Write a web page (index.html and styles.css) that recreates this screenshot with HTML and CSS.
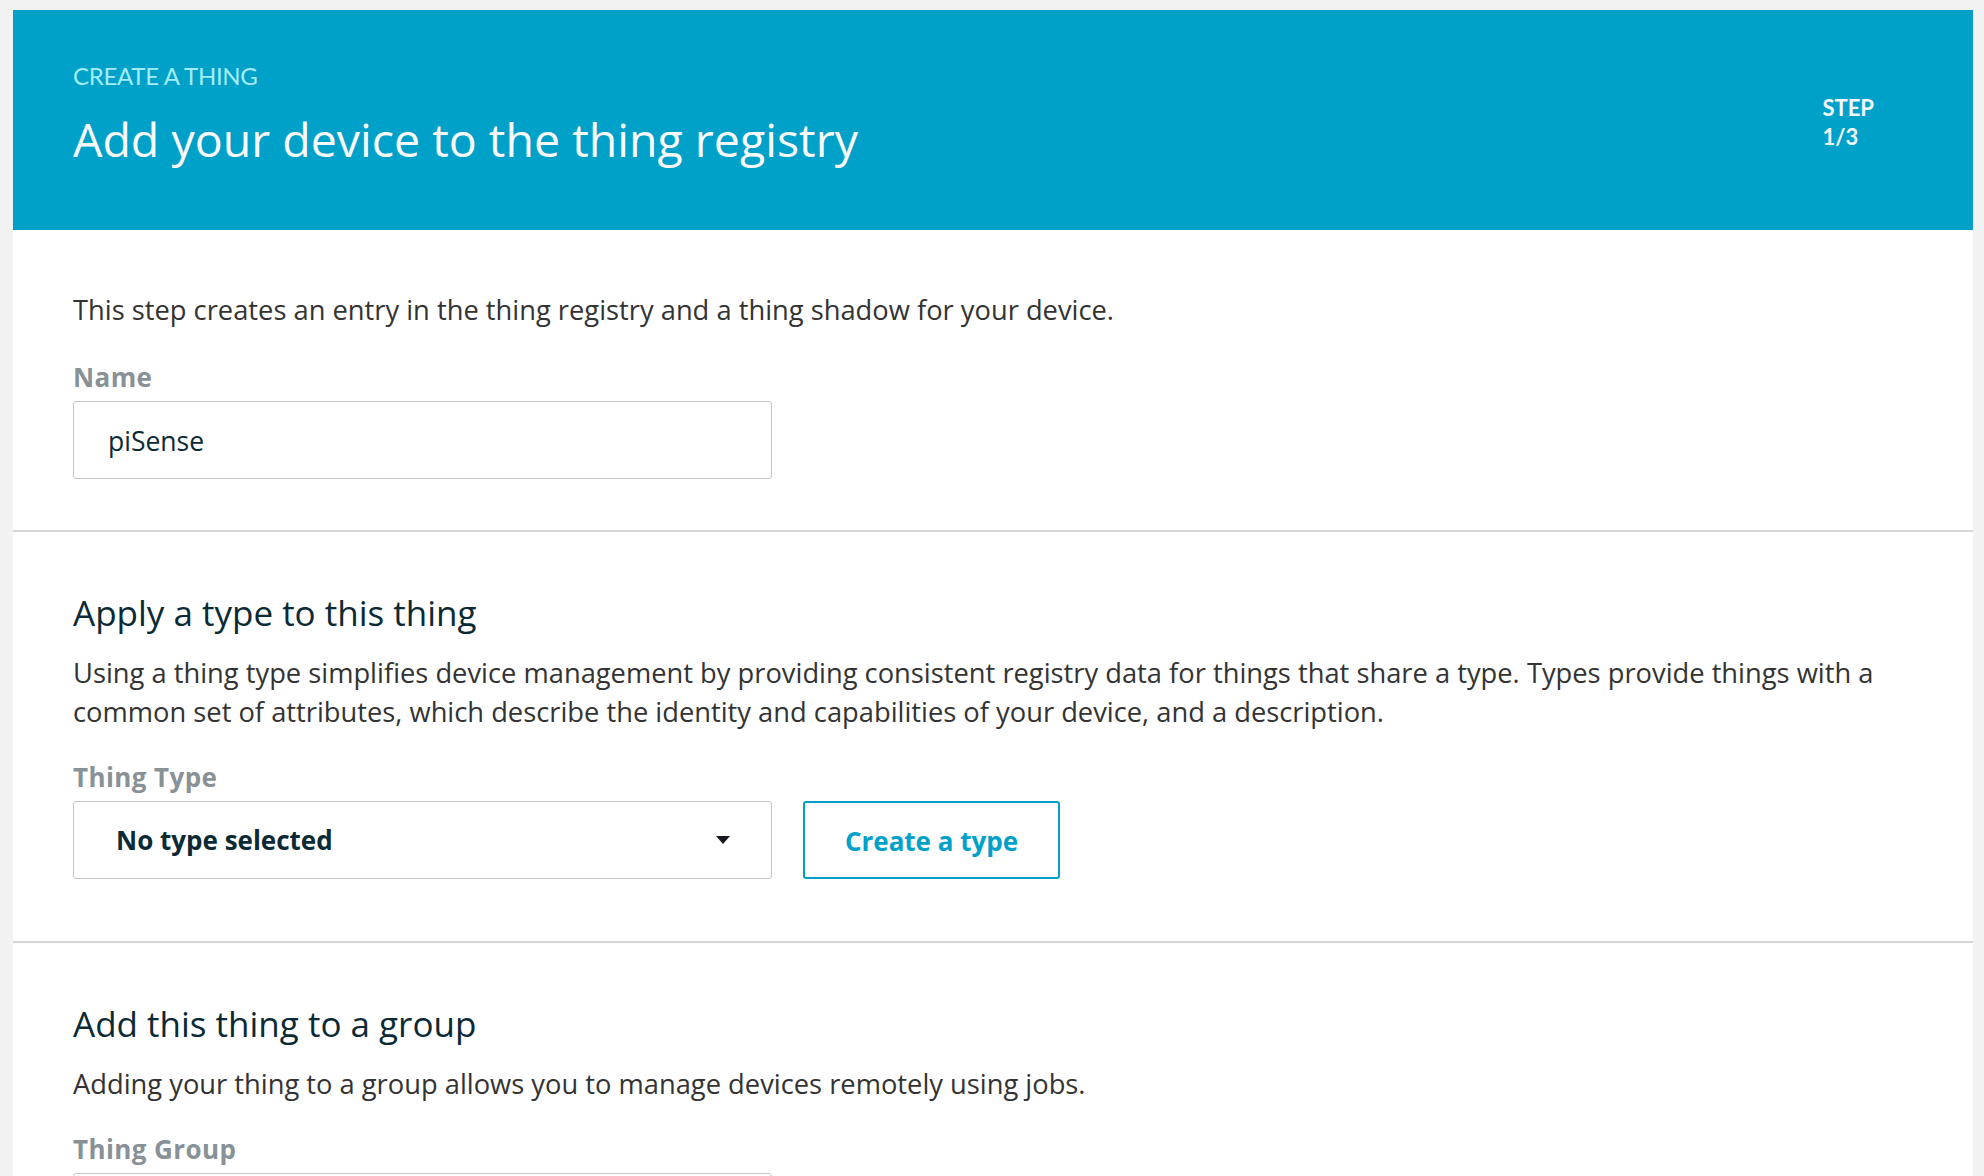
FILE: index.html
```html
<!DOCTYPE html>
<html lang="en">
<head>
<meta charset="utf-8">
<title>Create a thing</title>
<link rel="stylesheet" href="styles.css">
</head>
<body>
<main class="card">
  <header class="hero">
    <div class="hero-text">
      <div class="eyebrow">CREATE A THING</div>
      <h1 class="title">Add your device to the thing registry</h1>
    </div>
    <div class="step">STEP<br>1/3</div>
  </header>

  <section class="section section-first">
    <p class="intro">This step creates an entry in the thing registry and a thing shadow for your device.</p>
    <label class="label" for="name">Name</label>
    <input class="text-input" id="name" type="text" value="piSense">
  </section>

  <section class="section">
    <h2 class="heading">Apply a type to this thing</h2>
    <p class="para">Using a thing type simplifies device management by providing consistent registry data for things that share a type. Types provide things with a common set of attributes, which describe the identity and capabilities of your device, and a description.</p>
    <div class="label">Thing Type</div>
    <div class="row">
      <div class="select">
        <span class="select-value">No type selected</span>
        <svg class="caret" width="14" height="8" viewBox="0 0 14 8"><path d="M0 0h14L7 8z" fill="#16191f"/></svg>
      </div>
      <button class="btn" type="button">Create a type</button>
    </div>
  </section>

  <section class="section">
    <h2 class="heading">Add this thing to a group</h2>
    <p class="para">Adding your thing to a group allows you to manage devices remotely using jobs.</p>
    <div class="label">Thing Group</div>
    <div class="row">
      <div class="select">
        <span class="select-value">No group selected</span>
        <svg class="caret" width="14" height="8" viewBox="0 0 14 8"><path d="M0 0h14L7 8z" fill="#16191f"/></svg>
      </div>
    </div>
  </section>
</main>
</body>
</html>
```

FILE: styles.css
```css
html, body {
  margin: 0;
  padding: 0;
}
body {
  background: #f2f2f2;
  padding: 10px 11px 0 13px;
  font-family: "Open Sans", "Lato", "Liberation Sans", sans-serif;
  color: #3b3b3b;
}
.card {
  background: #ffffff;
  min-height: 1300px;
}
.hero {
  background: #00a1c9;
  height: 220px;
  box-sizing: border-box;
  padding: 51px 99px 0 60px;
  display: flex;
  justify-content: space-between;
  align-items: flex-start;
}
.eyebrow {
  font-family: "Lato", "Open Sans", sans-serif;
  font-size: 24px;
  line-height: 30px;
  color: #a3ecfa;
  letter-spacing: -0.3px;
}
.title {
  margin: 20px 0 0 0;
  font-size: 46.5px;
  line-height: 56px;
  font-weight: 400;
  color: #fafafa;
}
.step {
  font-family: "Lato", "Open Sans", sans-serif;
  margin-top: 32px;
  font-size: 22px;
  line-height: 29px;
  font-weight: 700;
  color: #f2f8fb;
}
.section {
  padding: 59px 60px 62px 60px;
  border-top: 2px solid #d5d5d5;
  display: flex;
  flex-direction: column;
  align-items: flex-start;
}
.section-first {
  border-top: none;
  padding-top: 60px;
  padding-bottom: 51px;
}
.intro {
  margin: 0 0 32px 0;
  font-size: 27.3px;
  line-height: 40px;
  color: #333333;
}
.label {
  font-size: 26px;
  line-height: 30px;
  font-weight: 700;
  color: #879196;
  margin: 0 0 9px 0;
  letter-spacing: 0.4px;
}
.text-input {
  width: 699px;
  height: 78px;
  box-sizing: border-box;
  border: 1px solid #c6c6c6;
  border-radius: 3px;
  padding: 2px 0 0 34px;
  font-family: inherit;
  font-size: 26.5px;
  color: #0b2a35;
  background: #ffffff;
  outline: none;
}
.heading {
  margin: 2px 0 0 0;
  font-size: 35px;
  line-height: 40px;
  font-weight: 400;
  color: #0b2a35;
}
.para {
  margin: 20px 0 31px 0;
  font-size: 27.3px;
  line-height: 39px;
  color: #333333;
  max-width: 1830px;
}
.row {
  display: flex;
  gap: 31px;
  align-items: stretch;
}
.select {
  width: 699px;
  height: 78px;
  box-sizing: border-box;
  border: 1px solid #c6c6c6;
  border-radius: 3px;
  padding: 0 41px 0 42px;
  display: flex;
  align-items: center;
  justify-content: space-between;
}
.select-value {
  font-size: 26px;
  font-weight: 700;
  color: #0b2a35;
}
.caret {
  display: block;
}
.btn {
  width: 257px;
  height: 78px;
  box-sizing: border-box;
  border: 2px solid #00a1c9;
  border-radius: 3px;
  background: #ffffff;
  font-family: inherit;
  font-size: 26px;
  font-weight: 700;
  color: #00a1c9;
  padding: 2px 0 0 0;
}
```
